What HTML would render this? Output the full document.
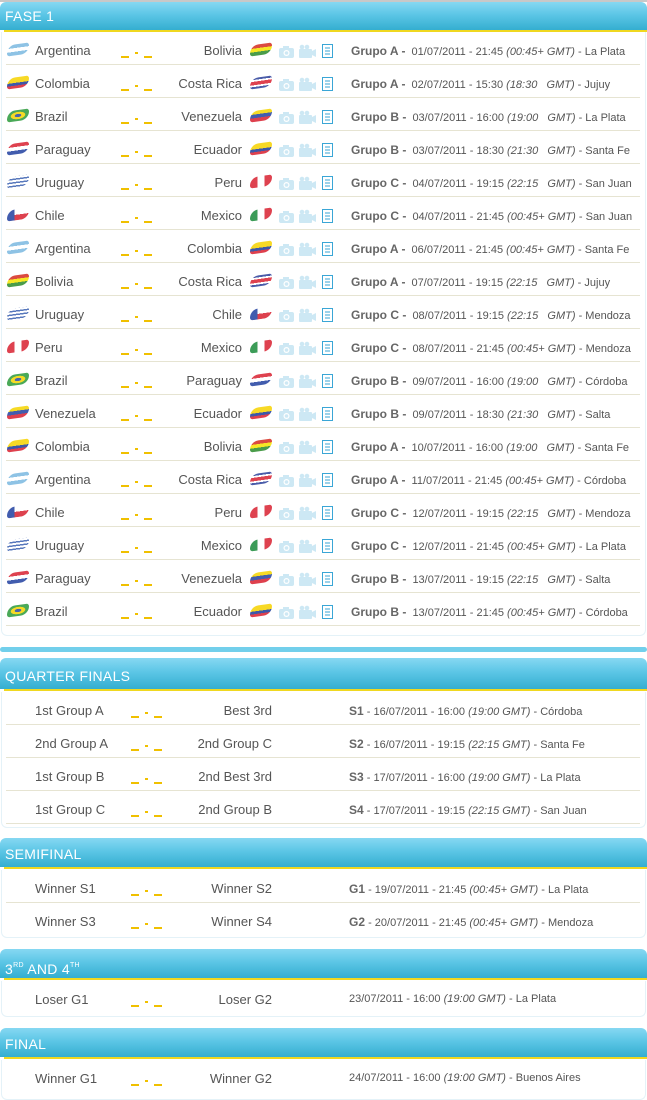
<!DOCTYPE html>
<html><head><meta charset="utf-8"><style>
*{margin:0;padding:0;box-sizing:border-box}
body{width:647px;height:1094px;background:#fff;position:relative;overflow:hidden;font-family:"Liberation Sans",Arial,sans-serif;color:#555}
.hd{position:absolute;left:0;width:647px;background:linear-gradient(#86d8f2,#5cc6e6 45%,#34aed0);border-radius:6px 6px 0 0;color:#fff;font-size:14px;padding-left:5px;letter-spacing:.3px}
.hd:after{content:"";position:absolute;left:4px;right:0;bottom:-2px;height:2px;background:#f0d820}
.box{position:absolute;left:1px;width:645px;border:1px solid #e4f2f8;border-top:none;border-radius:0 0 6px 6px}
.r{position:relative;height:33px;border-bottom:1px solid #e6e4d2;margin:0 5px 0 4px;font-size:13px}
.r span{position:absolute;top:11px;white-space:nowrap}
.t1{left:29px}
.t2{text-align:right}
.f{position:absolute;top:12px;width:22px;height:11px;border-radius:9px 3px 9px 3px;transform:skewY(-8deg);opacity:.85}
.sc{position:absolute;top:0;height:33px;width:34px}
.sc i{position:absolute;background:#f0c000}
.ic{position:absolute;top:11px}
.inf{position:absolute;top:12px;font-size:11px;color:#555}
.inf b{font-size:12px;color:#666}
.inf em{font-style:italic}
</style></head><body>
<div style="position:absolute;top:0;left:0;width:647px;height:2px;background:#c8c8c8"></div>

<div class="hd" style="top:2px;height:28px;line-height:29px">FASE 1</div>
<div class="box" style="top:32px;height:604px">
<div id="f1"></div>
</div>

<div style="position:absolute;top:647px;left:0;width:647px;height:5px;background:#72cfeb;border-radius:3px"></div>

<div class="hd" style="top:658px;height:31px;line-height:36px">QUARTER FINALS</div>
<div class="box" style="top:692px;height:136px" id="qf"></div>

<div class="hd" style="top:838px;height:29px;line-height:33px">SEMIFINAL</div>
<div class="box" style="top:870px;height:68px" id="sf"></div>

<div class="hd" style="top:949px;height:29px;line-height:33px">3<sup style="font-size:7px;vertical-align:7px">RD</sup> AND 4<sup style="font-size:7px;vertical-align:7px">TH</sup></div>
<div class="box" style="top:981px;height:36px" id="th"></div>

<div class="hd" style="top:1028px;height:29px;line-height:33px">FINAL</div>
<div class="box" style="top:1060px;height:40px" id="fn"></div>

<script>
var F={Argentina:"linear-gradient(#7ab8e0 33%,#fff 33%,#fff 66%,#7ab8e0 66%)",Bolivia:"linear-gradient(#d52b1e 33%,#f4e400 33%,#f4e400 66%,#2a8a2a 66%)",Colombia:"linear-gradient(#f6d200 50%,#1a3a9a 50%,#1a3a9a 75%,#d81e2e 75%)","Costa Rica":"linear-gradient(#2a3f9a 18%,#fff 18%,#fff 34%,#d82030 34%,#d82030 66%,#fff 66%,#fff 82%,#2a3f9a 82%)",Brazil:"radial-gradient(#2a4a9a 20%,#f4d400 22%,#f4d400 45%,#2a9a3a 48%)",Venezuela:"linear-gradient(#f4d400 33%,#2040a0 33%,#2040a0 66%,#d81e2e 66%)",Paraguay:"linear-gradient(#d82030 33%,#fff 33%,#fff 66%,#2040a0 66%)",Ecuador:"linear-gradient(#f6d200 50%,#1a3a9a 50%,#1a3a9a 75%,#d81e2e 75%)",Uruguay:"repeating-linear-gradient(#fff 0 2px,#3a60b0 2px 3.5px)",Peru:"linear-gradient(90deg,#d82030 33%,#fff 33%,#fff 66%,#d82030 66%)",Chile:"linear-gradient(90deg,#2040a0 35%,transparent 35%),linear-gradient(#fff 50%,#d82030 50%)",Mexico:"linear-gradient(90deg,#1a8a3a 33%,#fff 33%,#fff 66%,#d82030 66%)"};
var M=[["Argentina","Bolivia","A","01/07/2011 - 21:45","00:45+ GMT","La Plata"],["Colombia","Costa Rica","A","02/07/2011 - 15:30","18:30&nbsp;&nbsp; GMT","Jujuy"],["Brazil","Venezuela","B","03/07/2011 - 16:00","19:00&nbsp;&nbsp; GMT","La Plata"],["Paraguay","Ecuador","B","03/07/2011 - 18:30","21:30&nbsp;&nbsp; GMT","Santa Fe"],["Uruguay","Peru","C","04/07/2011 - 19:15","22:15&nbsp;&nbsp; GMT","San Juan"],["Chile","Mexico","C","04/07/2011 - 21:45","00:45+ GMT","San Juan"],["Argentina","Colombia","A","06/07/2011 - 21:45","00:45+ GMT","Santa Fe"],["Bolivia","Costa Rica","A","07/07/2011 - 19:15","22:15&nbsp;&nbsp; GMT","Jujuy"],["Uruguay","Chile","C","08/07/2011 - 19:15","22:15&nbsp;&nbsp; GMT","Mendoza"],["Peru","Mexico","C","08/07/2011 - 21:45","00:45+ GMT","Mendoza"],["Brazil","Paraguay","B","09/07/2011 - 16:00","19:00&nbsp;&nbsp; GMT","Córdoba"],["Venezuela","Ecuador","B","09/07/2011 - 18:30","21:30&nbsp;&nbsp; GMT","Salta"],["Colombia","Bolivia","A","10/07/2011 - 16:00","19:00&nbsp;&nbsp; GMT","Santa Fe"],["Argentina","Costa Rica","A","11/07/2011 - 21:45","00:45+ GMT","Córdoba"],["Chile","Peru","C","12/07/2011 - 19:15","22:15&nbsp;&nbsp; GMT","Mendoza"],["Uruguay","Mexico","C","12/07/2011 - 21:45","00:45+ GMT","La Plata"],["Paraguay","Venezuela","B","13/07/2011 - 19:15","22:15&nbsp;&nbsp; GMT","Salta"],["Brazil","Ecuador","B","13/07/2011 - 21:45","00:45+ GMT","Córdoba"]];
function sc(x){return '<div class="sc" style="left:'+x+'px"><i style="left:0;top:24px;width:8px;height:2px"></i><i style="left:14px;top:20px;width:3px;height:2px"></i><i style="left:23px;top:24px;width:8px;height:2px"></i></div>';}
var icons='<svg class="ic" style="left:272px" width="60" height="16"><g fill="#cde8f4"><rect x="1" y="5" width="15" height="10" rx="2"/><rect x="5" y="3" width="6" height="3"/></g><circle cx="8.5" cy="10" r="3" fill="#fff"/><circle cx="8.5" cy="10" r="1.8" fill="#cde8f4"/><g fill="#cde8f4"><rect x="21" y="6" width="13" height="9" rx="1"/><circle cx="24" cy="4" r="2.3"/><circle cx="29" cy="4" r="2.3"/><path d="M34 8l4-2v8l-4-2z"/></g><rect x="44.5" y="1.5" width="10" height="13" fill="#fff" stroke="#3aa6d6"/><path d="M47 5h5M47 8h5M47 11h5" stroke="#3aa6d6"/></svg>';
var h='';
M.forEach(function(m){h+='<div class="r"><div class="f" style="left:1px;background:'+F[m[0]]+'"></div><span class="t1">'+m[0]+'</span>'+sc(115)+'<span class="t2" style="right:398px">'+m[1]+'</span><div class="f" style="left:244px;background:'+F[m[1]]+'"></div>'+icons+'<div class="inf" style="left:345px"><b>Grupo '+m[2]+' -</b>&nbsp; '+m[3]+' <em>('+m[4]+')</em> - '+m[5]+'</div></div>';});
document.getElementById('f1').innerHTML=h;
function ko(id,rows){var s='';rows.forEach(function(m,i){s+='<div class="r"'+(i==rows.length-1&&id!='qf'?' style="border-bottom:none"':'')+'><span class="t1">'+m[0]+'</span>'+sc(125)+'<span class="t2" style="right:368px">'+m[1]+'</span><div class="inf" style="left:343px">'+m[2]+'</div></div>';});document.getElementById(id).innerHTML=s;}
ko('qf',[["1st Group A","Best 3rd","<b>S1</b> - 16/07/2011 - 16:00 <em>(19:00 GMT)</em> - Córdoba"],["2nd Group A","2nd Group C","<b>S2</b> - 16/07/2011 - 19:15 <em>(22:15 GMT)</em> - Santa Fe"],["1st Group B","2nd Best 3rd","<b>S3</b> - 17/07/2011 - 16:00 <em>(19:00 GMT)</em> - La Plata"],["1st Group C","2nd Group B","<b>S4</b> - 17/07/2011 - 19:15 <em>(22:15 GMT)</em> - San Juan"]]);
ko('sf',[["Winner S1","Winner S2","<b>G1</b> - 19/07/2011 - 21:45 <em>(00:45+ GMT)</em> - La Plata"],["Winner S3","Winner S4","<b>G2</b> - 20/07/2011 - 21:45 <em>(00:45+ GMT)</em> - Mendoza"]]);
ko('th',[["Loser G1","Loser G2","23/07/2011 - 16:00 <em>(19:00 GMT)</em> - La Plata"]]);
ko('fn',[["Winner G1","Winner G2","24/07/2011 - 16:00 <em>(19:00 GMT)</em> - Buenos Aires"]]);
</script>
</body></html>
